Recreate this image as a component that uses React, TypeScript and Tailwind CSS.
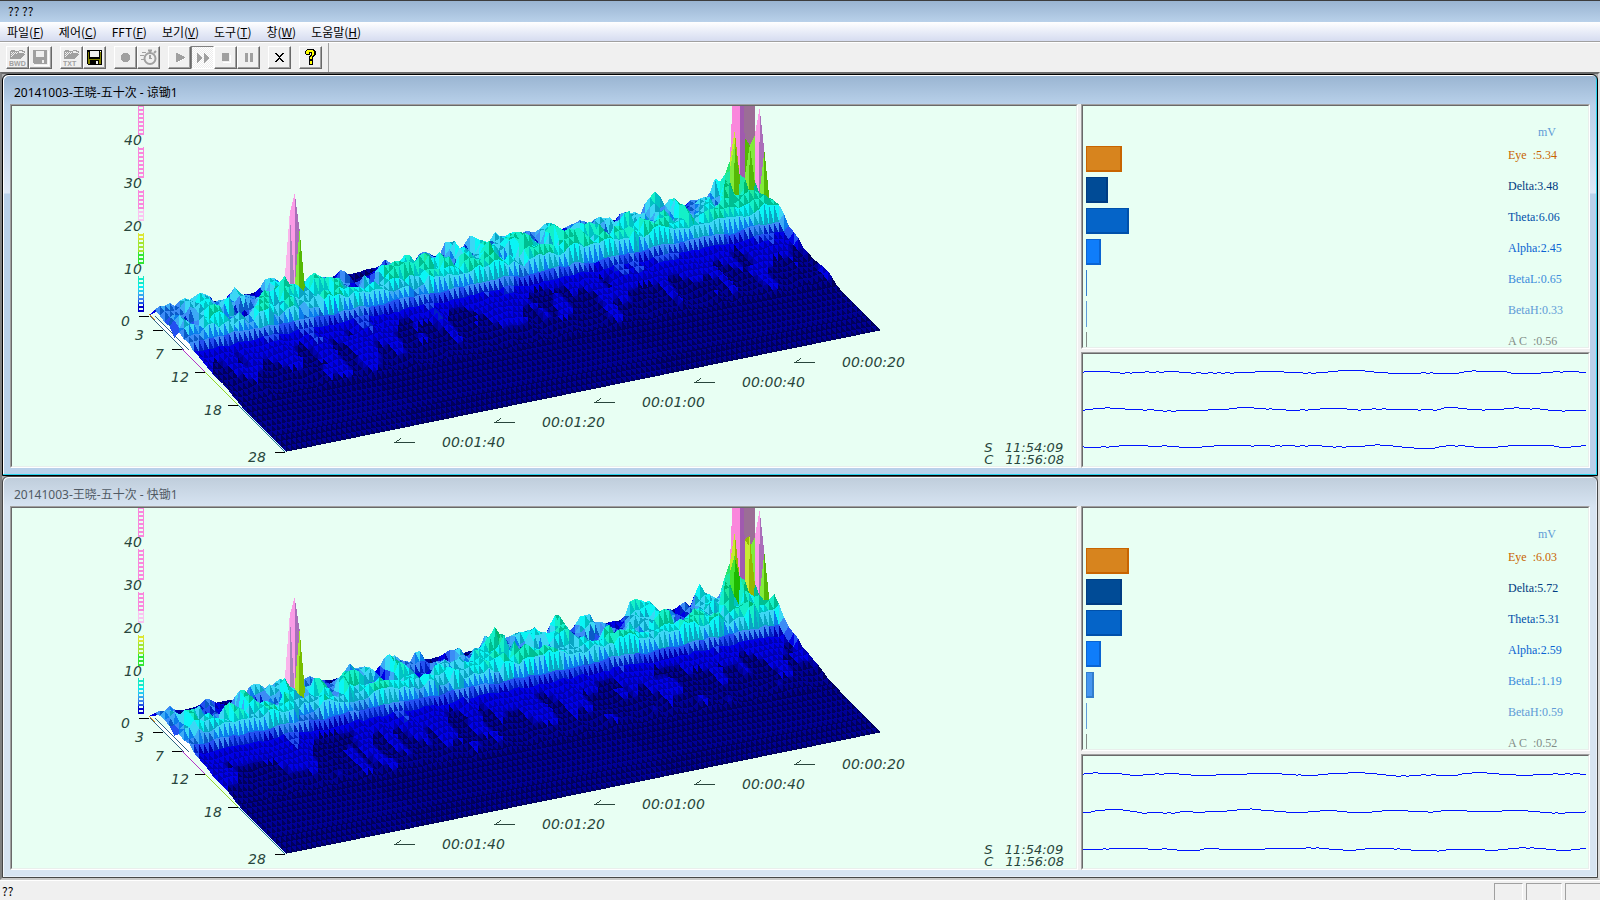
import type { ReactNode } from "react";

type Spike = [column: number, hz: number, value: number];

type Band = {
  name: string;
  value: string;
  width: number;
  bar: string;
  text: string;
};

type Session = {
  title: string;
  active: boolean;
  seed: number;
  spikes: Spike[];
  bands: Band[];
  waves: number[][];
};

const COLUMNS = 119;
const MAX_HZ = 28;
const UNIT = 4.3;

// [upper limit, lit side, shaded side]
const LEVELS: [number, string, string][] = [
  [1, "#000096", "#00005c"],
  [1.9, "#0000e6", "#0000b0"],
  [2.5, "#2350f0", "#0020c0"],
  [3.1, "#3c8cf5", "#0a5ac8"],
  [3.6, "#3caaf5", "#0a7deb"],
  [4.6, "#3cd7f5", "#0aa5c3"],
  [5.4, "#0af5f5", "#00c3c3"],
  [7, "#14f0c8", "#00be91"],
  [8.5, "#1ee8a0", "#00b96e"],
  [10.5, "#28e66e", "#00b432"],
  [14.5, "#46e632", "#1eb900"],
  [17.1, "#82eb3c", "#55b905"],
  [17.6, "#aaeb32", "#78be00"],
  [18.5, "#c8eb32", "#96b900"],
  [21, "#fab4eb", "#aa82be"],
  [28, "#fa9be6", "#aa6eb9"],
  [50, "#fa87dc", "#a05aaf"],
  [9999, "#9b6e96", "#9b6e96"],
];

const PROFILE = [
  0.4, 2.3, 3, 3.3, 3.7, 4.4, 4.9, 4.3, 2.8, 1.7, 1.4, 1.3, 1.15, 1.05, 0.95,
  0.8, 0.65, 0.5, 0.35, 0.2,
];

const LEFT_SPIKE: Spike[] = [
  [25, 2, 5],
  [26, 2, 20],
  [27, 2, 24.5],
  [28, 2, 9],
  [26, 3, 4],
  [27, 3, 17],
  [28, 3, 4],
  [24, 3, 7],
];

const RIGHT_SPIKES: Spike[] = [
  [114, 1, 7],
  [115, 1, 10],
  [116, 1, 36],
  [117, 1, 300],
  [118, 1, 300],
  [119, 1, 300],
  [113, 2, 7],
  [114, 2, 9],
  [115, 2, 18],
  [116, 2, 47],
  [117, 2, 16],
  [118, 2, 14],
  [119, 2, 16],
  [112, 3, 8],
  [113, 3, 8],
  [114, 3, 16.5],
  [115, 3, 9],
  [116, 3, 8],
  [117, 3, 15],
  [118, 3, 7],
  [119, 3, 23.5],
  [111, 4, 8],
  [112, 4, 8.4],
  [113, 4, 6],
  [115, 4, 7],
  [116, 4, 6],
  [117, 4, 5],
  [118, 4, 5],
  [119, 4, 14.7],
  [117, 5, 6.5],
  [118, 5, 5],
  [119, 5, 5],
];

const BAND_STYLES = [
  { name: "Eye  ", bar: "border-[#c86400] bg-[#d7841e]", text: "text-[#c86400]" },
  { name: "Delta", bar: "border-[#003c82] bg-[#004b96]", text: "text-[#003c82]" },
  { name: "Theta", bar: "border-[#0050aa] bg-[#0564c8]", text: "text-[#0050aa]" },
  { name: "Alpha", bar: "border-[#0a64d2] bg-[#0f7dfa]", text: "text-[#0a64d2]" },
  { name: "BetaL", bar: "border-[#327dcd] bg-[#4696f0]", text: "text-[#3c8cdc]" },
  { name: "BetaH", bar: "border-[#5f9bd7] bg-[#78b4f0]", text: "text-[#5f9bd7]" },
  { name: "A C  ", bar: "border-[#828c87] bg-[#969696]", text: "text-[#828c87]" },
];

function makeBands(rows: [string, number][]): Band[] {
  return rows.map(([value, width], i) => ({ ...BAND_STYLES[i], value, width }));
}

const SESSIONS: Session[] = [
  {
    title: "20141003-王晓-五十次 - 谅锄1",
    active: true,
    seed: 11,
    spikes: [...LEFT_SPIKE, ...RIGHT_SPIKES],
    bands: makeBands([
      ["5.34", 36],
      ["3.48", 22],
      ["6.06", 43],
      ["2.45", 15],
      ["0.65", 1],
      ["0.33", 1],
      ["0.56", 1],
    ]),
    // pairs of x, level
    waves: [
      [0, 0, 1, -1, 27, 0, 37, 1, 42, 0, 47, 1, 49, 0, 62, -1, 66, 0, 73, -1, 76, 0, 81, -1, 96, 0, 108, 1, 113, 0, 118, 1, 125, 0, 130, 1, 134, 0, 138, 1, 142, 0, 147, 1, 151, 0, 172, -1, 201, 0, 220, 1, 225, 0, 228, 1, 233, 0, 245, -1, 255, -2, 282, -1, 291, 0, 305, 1, 338, 0, 343, 1, 347, 0, 350, 1, 376, 0, 381, -1, 389, -2, 393, -1, 424, 0, 428, 1, 458, 0, 470, -1, 477, 0, 480, -1, 496, 0],
      [0, 1, 2, 0, 10, -1, 22, -2, 27, -1, 42, 0, 60, 1, 64, 0, 71, 1, 80, 2, 84, 1, 88, 2, 93, 1, 125, 0, 146, -1, 154, -2, 171, -1, 183, 0, 186, -1, 189, 0, 203, 1, 217, 0, 222, 1, 225, 0, 237, -1, 264, 0, 275, 1, 278, 0, 289, -1, 293, 0, 299, -1, 303, 0, 335, 1, 338, 0, 350, 1, 354, 0, 358, -1, 361, -2, 375, -1, 384, 0, 399, 1, 402, 0, 421, -1, 431, -2, 436, -1, 447, 0, 449, -1, 457, 0, 465, 1, 479, 2, 482, 1],
      [0, 0, 1, 1, 18, 0, 23, 1, 26, 0, 36, -1, 65, 0, 79, -1, 84, 0, 96, 1, 119, 0, 131, -1, 168, 0, 171, -1, 187, 0, 192, -1, 197, 0, 199, -1, 212, 0, 217, -1, 222, 0, 225, -1, 239, 0, 250, 1, 253, 0, 259, 1, 263, 0, 282, -1, 292, -2, 297, -1, 310, 0, 319, 1, 331, 2, 352, 1, 356, 0, 363, -1, 372, 0, 375, -1, 382, 0, 391, 1, 415, 0, 425, -1, 471, 0, 476, 1, 488, 0, 498, -1],
    ],
  },
  {
    title: "20141003-王晓-五十次 - 快锄1",
    active: false,
    seed: 47,
    spikes: [
      ...LEFT_SPIKE,
      ...RIGHT_SPIKES,
      [27, 2, 24],
      [27, 3, 17.5],
      [64, 3, 6],
      [65, 3, 7],
      [66, 3, 9],
      [67, 3, 7],
      [66, 4, 6],
      [67, 4, 8],
      [68, 5, 7.5],
      [69, 6, 7.5],
      [114, 3, 14],
      [117, 3, 18],
    ],
    bands: makeBands([
      ["6.03", 43],
      ["5.72", 36],
      ["5.31", 36],
      ["2.59", 15],
      ["1.19", 8],
      ["0.59", 1],
      ["0.52", 1],
    ]),
    waves: [
      [0, 0, 1, -1, 10, -2, 15, -1, 39, 0, 47, 1, 60, 0, 72, -1, 76, 0, 81, -1, 96, 0, 108, 1, 133, 0, 164, -1, 199, 0, 213, 1, 215, 0, 218, 1, 235, 0, 245, -1, 265, -2, 282, -1, 294, 0, 303, 1, 313, 2, 318, 1, 323, 2, 326, 1, 338, 0, 343, 1, 348, 0, 353, 1, 375, 0, 379, -1, 389, -2, 404, -1, 416, 0, 433, 1, 450, 0, 470, -1, 475, 0, 482, -1, 487, 0, 490, -1, 497, 0],
      [0, 1, 8, 0, 12, -1, 22, -2, 40, -1, 47, 0, 54, 1, 59, 2, 64, 1, 80, 2, 84, 1, 88, 2, 92, 1, 97, 0, 110, 1, 122, 0, 144, -1, 154, -2, 167, -3, 169, -2, 178, -1, 191, 0, 203, 1, 225, 0, 237, -1, 254, 0, 264, 1, 289, 0, 299, -1, 325, 0, 345, 1, 350, 0, 358, -1, 384, 0, 419, -1, 445, 0, 457, 1, 469, 2, 472, 1, 475, 2, 482, 1, 502, 0],
      [0, 1, 20, 0, 23, 1, 26, 0, 65, 1, 79, 0, 84, 1, 94, 2, 117, 1, 121, 0, 136, 1, 182, 0, 223, -1, 228, 0, 233, -1, 236, 0, 246, 1, 260, 2, 273, 1, 282, 0, 311, 1, 314, 0, 317, 1, 328, 2, 354, 3, 356, 2, 363, 1, 402, 2, 415, 1, 425, 0, 436, -1, 443, 0, 447, -1, 451, 0, 463, 1, 473, 2, 488, 1, 497, 0],
    ],
  },
];

const MENU = [
  ["파일", "F"],
  ["제어", "C"],
  ["FFT", "F"],
  ["보기", "V"],
  ["도구", "T"],
  ["창", "W"],
  ["도움말", "H"],
];

const AMPLITUDES = [
  { label: "40", y: 145 },
  { label: "30", y: 188 },
  { label: "20", y: 231 },
  { label: "10", y: 274 },
];

const FREQUENCIES = [
  { label: "0", textX: 121, tickX: 139, y: 316 },
  { label: "3", textX: 135, tickX: 153, y: 330 },
  { label: "7", textX: 155, tickX: 172, y: 349 },
  { label: "12", textX: 171, tickX: 195, y: 372 },
  { label: "18", textX: 204, tickX: 228, y: 405 },
  { label: "28", textX: 248, tickX: 275, y: 452 },
];

const TIMES = ["00:00:20", "00:00:40", "00:01:00", "00:01:20", "00:01:40"];

const LEGEND = [
  { top: 106, bottom: 135 },
  { top: 147, bottom: 178 },
  { top: 190, bottom: 221 },
  { top: 233, bottom: 264 },
  { top: 276, bottom: 312 },
];

function noise(a: number, b: number, seed: number) {
  let n = Math.imul(a + 101, 374761393) ^ Math.imul(b + 57, 668265263) ^ Math.imul(seed, 2147483629);
  n = Math.imul(n ^ (n >>> 13), 1274126177);
  n = Math.imul(n ^ (n >>> 16), 1911520717);
  return ((n ^ (n >>> 15)) >>> 0) / 4294967296;
}

function smoothNoise(x: number, y: number, seed: number) {
  const xi = Math.floor(x);
  const yi = Math.floor(y);
  const u = x - xi;
  const v = y - yi;
  const top = noise(xi, yi, seed) * (1 - u) + noise(xi + 1, yi, seed) * u;
  const low = noise(xi, yi + 1, seed) * (1 - u) + noise(xi + 1, yi + 1, seed) * u;
  return top * (1 - v) + low * v;
}

function buildHeights(seed: number, spikes: Spike[]) {
  const rows: number[][] = [];
  for (let hz = 0; hz <= MAX_HZ; hz++) {
    const row: number[] = [];
    for (let i = 0; i <= COLUMNS; i++) {
      let h = PROFILE[hz] ?? 0.1;
      const wide = smoothNoise(i / 1.7, hz / 1.3, seed) - 0.5;
      const fine = noise(i, hz, seed + 3) - 0.5;
      if (hz === 0) {
        h += 0.4 * fine;
      } else if (hz < 8) {
        h += wide * (hz < 6 ? 6.8 : 4) + fine * 1.2 + (i / COLUMNS) * 1.1;
        if (i < 3) h *= 0.6 + i / 8;
      } else if (hz < 19) {
        h += (smoothNoise(i / 1.8, hz / 3.4, seed + 9) - 0.5) * (hz < 11 ? 1.5 : 1.9) + fine * 0.35;
        // the last slices keep a raised edge down to 18 Hz
        if (i === COLUMNS) h += hz < 12 ? 1.5 : 0.5;
      }
      row.push(Math.max(0, h));
    }
    rows.push(row);
  }
  spikes.forEach(([i, hz, value]) => {
    rows[hz][i] = value;
  });
  return rows;
}

function buildSurface(seed: number, spikes: Spike[]) {
  const rows = buildHeights(seed, spikes);
  const at = (i: number, hz: number) => {
    const x = 150 + 5 * i + 4.86 * hz;
    const y = 316 - 1.02 * i + 4.86 * hz - UNIT * rows[hz][i];
    return `${x.toFixed(1)},${y.toFixed(1)}`;
  };
  const color = (corners: number[], slope: number) => {
    const peak = Math.max(...corners);
    // tall faces take the colour of their tip
    const value = peak > 9.5 ? peak : corners.reduce((sum, h) => sum + h, 0) / 3;
    const level = LEVELS.find(([limit]) => value < limit)!;
    return slope >= 0 ? level[1] : level[2];
  };
  const faces: { points: string; fill: string }[] = [];
  for (let hz = 0; hz < MAX_HZ; hz++) {
    for (let i = 0; i < COLUMNS; i++) {
      const a = rows[hz][i];
      const b = rows[hz][i + 1];
      const c = rows[hz + 1][i];
      const d = rows[hz + 1][i + 1];
      faces.push({
        points: `${at(i, hz)} ${at(i + 1, hz)} ${at(i, hz + 1)}`,
        fill: color([a, b, c], b - a + 1.3),
      });
      faces.push({
        points: `${at(i + 1, hz)} ${at(i, hz + 1)} ${at(i + 1, hz + 1)}`,
        fill: color([b, c, d], d - (b > 9.5 ? b : c) - 1.3),
      });
    }
  }
  return faces;
}

function legendColor(value: number) {
  if (value < 2) return "#0000c8";
  if (value < 3) return "#1e50e6";
  if (value < 4) return "#3c82f0";
  if (value < 5) return "#32aaf0";
  if (value < 6) return "#28cdf0";
  if (value < 7) return "#0aebf0";
  if (value < 9) return "#14ebc8";
  if (value < 14) return "#32e632";
  if (value < 17) return "#a5e632";
  if (value < 20) return "#dce632";
  if (value < 24) return "#fac3f0";
  return "#fa87dc";
}

function Legend() {
  return (
    <g>
      {LEGEND.map(({ top, bottom }) => {
        const rungs: number[] = [];
        for (let y = bottom; y > top; y -= 4) rungs.push(y);
        return rungs.map((y) => (
          <path
            key={y}
            d={`M138 ${Math.max(top, y - 4)}V${y}H144V${Math.max(top, y - 4)}H143V${y - 2}H139V${Math.max(top, y - 4)}Z`}
            fill={legendColor((316 - y) / UNIT)}
          />
        ));
      })}
    </g>
  );
}

function SpectrumChart({ seed, spikes }: { seed: number; spikes: Spike[] }) {
  return (
    <svg
      width="1064"
      height="362"
      viewBox="12 106 1064 362"
      shapeRendering="crispEdges"
      className="shrink-0"
      role="img"
      aria-label="FFT"
    >
      <Legend />
      <path d="M149 316L190 340V357Z" fill="#fff" />
      <path d="M149 314L192 357" stroke="#e68200" strokeWidth="1" strokeDasharray="8 100" />
      <path d="M150 316L184 350M155 316L189 350" stroke="#2d6482" strokeWidth="1" />
      {buildSurface(seed, spikes).map((face, i) => (
        <polygon key={i} points={face.points} fill={face.fill} />
      ))}
      <path d="M182 349L205 372" stroke="#b432c8" />
      <path d="M205 372L238 405" stroke="#96d728" />
      <path d="M238 405L285 452" stroke="#1e7896" />
      {FREQUENCIES.map(({ label, tickX, y }) => (
        <path key={label} d={`M${tickX} ${y}.5h10`} stroke="#000" />
      ))}
      {TIMES.map((time, i) => (
        <path
          key={time}
          d={`M${815 - i * 100} ${362 + i * 20}.5h-20l6 -4`}
          fill="none"
          stroke="#28463c"
        />
      ))}
      <g className="fill-[#28463c] font-['DejaVu_Sans'] text-[14px] font-extralight italic">
        {AMPLITUDES.map(({ label, y }) => (
          <text key={label} x="124" y={y}>
            {label}
          </text>
        ))}
        {FREQUENCIES.map(({ label, textX, y }) => (
          <text key={label} x={textX} y={y + 10}>
            {label}
          </text>
        ))}
        {TIMES.map((time, i) => (
          <text key={time} x={842 - i * 100} y={367 + i * 20}>
            {time}
          </text>
        ))}
      </g>
    </svg>
  );
}

function Panel({ className, children }: { className: string; children: ReactNode }) {
  return (
    <div className={`border border-t-[#a0a0a0] border-r-white border-b-white border-l-[#a0a0a0] ${className}`}>
      <div className="relative flex h-full overflow-hidden border border-t-[#696969] border-r-[#e9efec] border-b-[#e9efec] border-l-[#696969] bg-[#e8fff3]">
        {children}
      </div>
    </div>
  );
}

function BandPanel({ bands }: { bands: Band[] }) {
  return (
    <div className="w-full pl-[3px] font-['Liberation_Serif'] text-[12px] leading-[18px]">
      <div className="flex h-10 items-end justify-end pb-[5px]">
        <span className="w-[50px] text-[#5f9bd7]">mV</span>
      </div>
      <ul className="flex flex-col gap-[5px]">
        {bands.map((band) => (
          <li key={band.name} className="flex h-[26px] items-start justify-between">
            <span
              className={`h-full ${band.width > 1 ? "border border-r-2 border-b-2" : "border-l"} ${band.bar}`}
              style={{ width: band.width }}
            />
            <span className={`w-20 whitespace-pre ${band.text}`}>
              {band.name}:{band.value}
            </span>
          </li>
        ))}
      </ul>
    </div>
  );
}

function wavePath(points: number[], base: number) {
  let d = "";
  for (let i = 0; i < points.length; i += 2) {
    const end = points[i + 2] ?? 503;
    d += `M${points[i]} ${base + points[i + 1]}.5H${end}`;
  }
  return d;
}

function WavePanel({ waves }: { waves: number[][] }) {
  return (
    <svg width="503" height="112" shapeRendering="crispEdges" stroke="#0014ff" fill="none">
      {waves.map((points, i) => (
        <path key={i} d={wavePath(points, 18 + i * 37)} />
      ))}
    </svg>
  );
}

function SessionWindow({ session }: { session: Session }) {
  return (
    <section
      className={`flex min-h-0 flex-1 flex-col overflow-hidden rounded-t-md border ${
        session.active
          ? "border-black bg-[linear-gradient(#99b4d1_0,#b9d1ea_30px,#dfe9f7_118px,#b9d1ea_119px)] shadow-[inset_-1px_-1px_#28d2eb,inset_1px_1px_#fff]"
          : "border-[#464646] bg-[linear-gradient(#bfcddb_0,#d7e4f2_30px)] shadow-[inset_1px_1px_#f4f8fc,inset_-1px_-1px_#e6eef8]"
      }`}
    >
      <h2
        className={`h-[29px] shrink-0 pl-[11px] font-['Noto_Sans','Noto_Sans_CJK_SC',sans-serif] text-[12px] leading-9 ${
          session.active ? "text-black" : "text-[#505a64]"
        }`}
      >
        {session.title}
      </h2>
      <div className="mx-[7px] mb-[7px] grid min-h-0 flex-1 grid-cols-[1068fr_509fr] gap-[3px] bg-[#f0f0f0]">
        <Panel className="min-h-0 min-w-0">
          <SpectrumChart seed={session.seed} spikes={session.spikes} />
          <div className="absolute right-3 bottom-0 font-['DejaVu_Sans'] text-[13px] leading-3 font-extralight whitespace-pre text-[#28463c] italic">
            <p>S   11:54:09</p>
            <p>C   11:56:08</p>
          </div>
        </Panel>
        <div className="flex min-h-0 min-w-0 flex-col gap-[3px]">
          <Panel className="min-h-0 flex-1">
            <BandPanel bands={session.bands} />
          </Panel>
          <Panel className="h-[116px] shrink-0">
            <WavePanel waves={session.waves} />
          </Panel>
        </div>
      </div>
    </section>
  );
}

function ToolButton({ label, pressed, children }: { label: string; pressed?: boolean; children: ReactNode }) {
  return (
    <button
      type="button"
      aria-label={label}
      className={`flex size-[23px] items-center justify-center border ${
        pressed
          ? "border-t-[#808080] border-r-white border-b-white border-l-[#808080] bg-[repeating-conic-gradient(#fff_0_25%,#ececec_0_50%)] bg-[length:2px_2px]"
          : "border-t-white border-r-[#696969] border-b-[#696969] border-l-white bg-[#f0f0f0] shadow-[inset_-1px_-1px_#a0a0a0]"
      }`}
    >
      <svg width="17" height="17" viewBox="0 0 17 17" shapeRendering="crispEdges">
        {children}
      </svg>
    </button>
  );
}

function FolderIcon({ label }: { label: string }) {
  return (
    <>
      <path d="M1 10V2h1V1h4v1h4v2h5v1h1v1h-1v1h-1v1h-1v1h-1v1z" fill="#a0a0a0" />
      <path d="M2 3h1M4 3h1M6 3h1M8 3h1M3 4h1M5 4h1M7 4h1M2 5h1M4 5h1M3 6h1M2 7h1" transform="translate(0 .5)" stroke="#f0f0f0" />
      <path d="M10 1h3v1h2v2" fill="none" stroke="#a0a0a0" />
      <text x="0" y="17" className="fill-[#a0a0a0] font-['Liberation_Sans'] text-[7px] font-bold">
        {label}
      </text>
    </>
  );
}

function DiskIcon({ enabled }: { enabled?: boolean }) {
  return enabled ? (
    <>
      <path d="M1 1h15v15H2L1 15z" fill="#000" />
      <path d="M2 3h1v7h11V3h1v12h-2v-4H4v4H2z" fill="#808000" />
      <path d="M4 2h9v6H4zM10 12h2v3h-2z" fill="#f0f0f0" />
      <path d="M14 2h1v1h-1z" fill="#fff" />
    </>
  ) : (
    <>
      <path d="M2 16h14V2" fill="none" stroke="#fff" />
      <path d="M1 1h14v14H2L1 14z" fill="#a0a0a0" />
      <path d="M4 2h8v6H4zM10 11h2v3h-2z" fill="#f0f0f0" />
    </>
  );
}

function StopwatchIcon() {
  return (
    <g fill="none" stroke="#a0a0a0" shapeRendering="auto">
      <circle cx="10" cy="9.5" r="5.5" strokeWidth="2" />
      <path d="M10 6v4M8 1.5h4M10 2v2M14 4l2-2" strokeWidth="2" />
      <path d="M2 3.5h4M0 6.5h4M1 10.5h3M10 9.5h2" />
    </g>
  );
}

function ToolGroup({ children }: { children: ReactNode }) {
  return <div className="flex">{children}</div>;
}

function Toolbar() {
  return (
    <div className="flex h-[30px] shrink-0 items-center border-t border-white bg-[#f0f0f0] pl-[6px]">
      <div className="flex h-full items-center gap-2 border-r border-[#a0a0a0] pr-[6px]">
        <ToolGroup>
          <ToolButton label="BWD 열기">
            <FolderIcon label="BWD" />
          </ToolButton>
          <ToolButton label="BWD 저장">
            <DiskIcon />
          </ToolButton>
        </ToolGroup>
        <ToolGroup>
          <ToolButton label="TXT 열기">
            <FolderIcon label="TXT" />
          </ToolButton>
          <ToolButton label="TXT 저장">
            <DiskIcon enabled />
          </ToolButton>
        </ToolGroup>
        <ToolGroup>
          <ToolButton label="기록">
            <path d="M6 4h5v1h1v1h1v5h-1v1h-1v1H6v-1H5v-1H4V6h1V5h1z" fill="#a0a0a0" />
          </ToolButton>
          <ToolButton label="타이머">
            <StopwatchIcon />
          </ToolButton>
        </ToolGroup>
        <ToolGroup>
          <ToolButton label="재생">
            <path d="M6 13l8-4" stroke="#fff" />
            <path d="M5 4h1l8 4v1l-8 4H5z" fill="#a0a0a0" />
          </ToolButton>
          <ToolButton label="빨리 재생" pressed>
            <path d="M3 4l6 5-6 5zM10 4l6 5-6 5z" fill="#a0a0a0" />
          </ToolButton>
          <ToolButton label="정지">
            <path d="M6 13h7V6" fill="none" stroke="#fff" />
            <path d="M5 4h7v8H5z" fill="#a0a0a0" />
          </ToolButton>
          <ToolButton label="일시 정지">
            <path d="M5 4h3v9H5zM10 4h3v9h-3z" fill="#a0a0a0" />
          </ToolButton>
        </ToolGroup>
        <ToolButton label="닫기">
          <path d="M4 4h2v1h1v1h1v1h1v-1h1V5h1V4h2v1h-1v1h-1v1h-1v1h-1v1h1v1h1v1h1v1h1v1h-2v-1h-1v-1h-1v-1H8v1H7v1H6v1H4v-1h1v-1h1v-1h1v-1h1V8H7V7H6V6H5V5H4z" fill="#000" />
        </ToolButton>
        <ToolButton label="도움말">
          <path d="M5 0h7v1h1v1h1v4h-1v1h-1v1h-1v3H7V7h1V6h1V4H8v2H4V5H3V2h1V1h1zM7 11h4v5H7z" fill="#000" />
          <path d="M5 1h6v1h1v4h-1v1h-1v3H8V8h1V7h1V3H7v2H4V2h1zM8 12h2v3H8z" fill="#ffff00" />
        </ToolButton>
      </div>
    </div>
  );
}

export default function App() {
  return (
    <div className="flex h-screen flex-col overflow-hidden bg-[#f0f0f0] font-['Noto_Sans_CJK_KR',sans-serif] text-[12px] text-black">
      <header className="h-[22px] shrink-0 border-t border-[#3c3c3c] bg-linear-to-b from-[#99b4d1] to-[#b9d1ea] pl-2 leading-5">
        ?? ??
      </header>
      <nav className="flex h-5 shrink-0 items-center gap-[15px] border-b border-[#a0a0a0] bg-linear-to-b from-white via-[#e9edf8] to-[#d6dcf0] pl-[7px]">
        {MENU.map(([label, key]) => (
          <button key={label} type="button" className="leading-[18px]">
            {label}(<u>{key}</u>)
          </button>
        ))}
      </nav>
      <Toolbar />
      <main className="flex min-h-0 flex-1 flex-col border-2 border-t-[#696969] border-r-[#dcdcdc] border-b-[#c8c8c8] border-l-[#808080] bg-[#ababab]">
        {SESSIONS.map((session) => (
          <SessionWindow key={session.title} session={session} />
        ))}
      </main>
      <footer className="flex h-5 shrink-0 items-end justify-between border-t border-white pl-[2px]">
        <span className="leading-[18px]">??</span>
        <div className="flex h-[17px] gap-[3px]">
          <span className="w-[29px] border border-b-0 border-[#a0a0a0] border-r-white" />
          <span className="w-[36px] border border-b-0 border-[#a0a0a0] border-r-white" />
          <span className="w-[35px] border border-r-0 border-b-0 border-[#a0a0a0]" />
        </div>
      </footer>
    </div>
  );
}
